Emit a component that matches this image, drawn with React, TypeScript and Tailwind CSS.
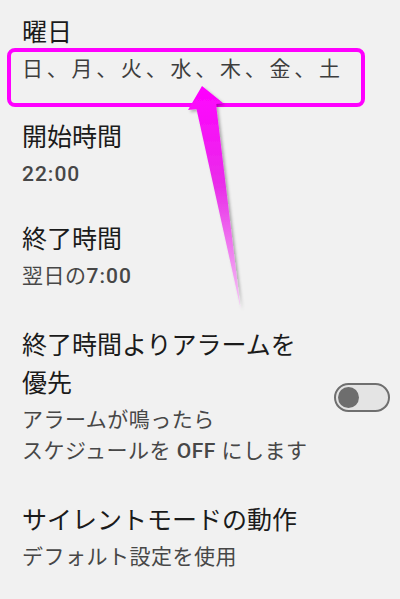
import type { ReactNode } from 'react';

interface SettingRowProps {
  title: ReactNode;
  children?: ReactNode;
  className?: string;
  trailing?: ReactNode;
}

function SettingRow({ title, children, className = '', trailing }: SettingRowProps) {
  return (
    <div className={`flex items-center pl-[22px] pr-[10px] ${className}`}>
      <div className="min-w-0 flex-1">
        <div className="text-[25px] leading-[38px] text-[#1b1b1b]">{title}</div>
        {children && (
          <div className="mt-[2px] text-[21px] leading-[31px] tracking-[0.5px] text-[#474747]">
            {children}
          </div>
        )}
      </div>
      {trailing}
    </div>
  );
}

function Toggle() {
  return (
    <div className="ml-[14px] flex h-[29px] w-[56px] shrink-0 items-center rounded-full border-2 border-[#6f6f6f] bg-[#e4e4e4] px-[2px]">
      <span className="h-[21px] w-[21px] rounded-full bg-[#6e6e6e]" />
    </div>
  );
}

// callout: magenta frame around the weekday row plus a tapering arrow pointing at it
function Callout() {
  return (
    <>
      <div className="pointer-events-none absolute left-[7px] top-[48px] h-[59px] w-[358px] rounded-[8px] border-[4.5px] border-[#ff00ff]" />
      <svg className="pointer-events-none absolute left-0 top-0" width="400" height="599" viewBox="0 0 400 599">
        <defs>
          <linearGradient id="arrowFill" x1="0" y1="86" x2="0" y2="310" gradientUnits="userSpaceOnUse">
            <stop offset="0" stopColor="#ff00ff" />
            <stop offset="0.45" stopColor="#e92ee9" />
            <stop offset="1" stopColor="#f6c8f6" />
          </linearGradient>
          <filter id="arrowShadow" x="-50%" y="-20%" width="200%" height="140%">
            <feDropShadow dx="2" dy="2" stdDeviation="1.8" floodColor="#000" floodOpacity="0.3" />
          </filter>
        </defs>
        <path
          d="M202 86 L223 103 L216 104 L240.5 308 L196.5 109 L188 110 Z"
          fill="url(#arrowFill)"
          filter="url(#arrowShadow)"
        />
      </svg>
    </>
  );
}

export default function App() {
  return (
    <div className="relative h-[599px] w-[400px] overflow-hidden bg-[#f1f1f1] font-[Roboto,'Noto_Sans_CJK_JP',sans-serif]">
      <div className="flex flex-col pt-[14px]">
        <SettingRow title="曜日">
          <span className="text-[21px] tracking-[3.75px] text-[#3d3d3d]">日、月、火、水、木、金、土</span>
        </SettingRow>

        <SettingRow title="開始時間" className="mt-[34px]">
          <span className="font-medium tracking-[1px]">22:00</span>
        </SettingRow>

        <SettingRow title="終了時間" className="mt-[31px]">
          翌日の<span className="font-medium tracking-[1px]">7:00</span>
        </SettingRow>

        <SettingRow title="終了時間よりアラームを優先" className="mt-[35px]" trailing={<Toggle />}>
          アラームが鳴ったら
          <br />
          スケジュールを <span className="font-medium">OFF</span> にします
        </SettingRow>

        <SettingRow title="サイレントモードの動作" className="mt-[35px]">
          デフォルト設定を使用
        </SettingRow>
      </div>

      <Callout />
    </div>
  );
}
